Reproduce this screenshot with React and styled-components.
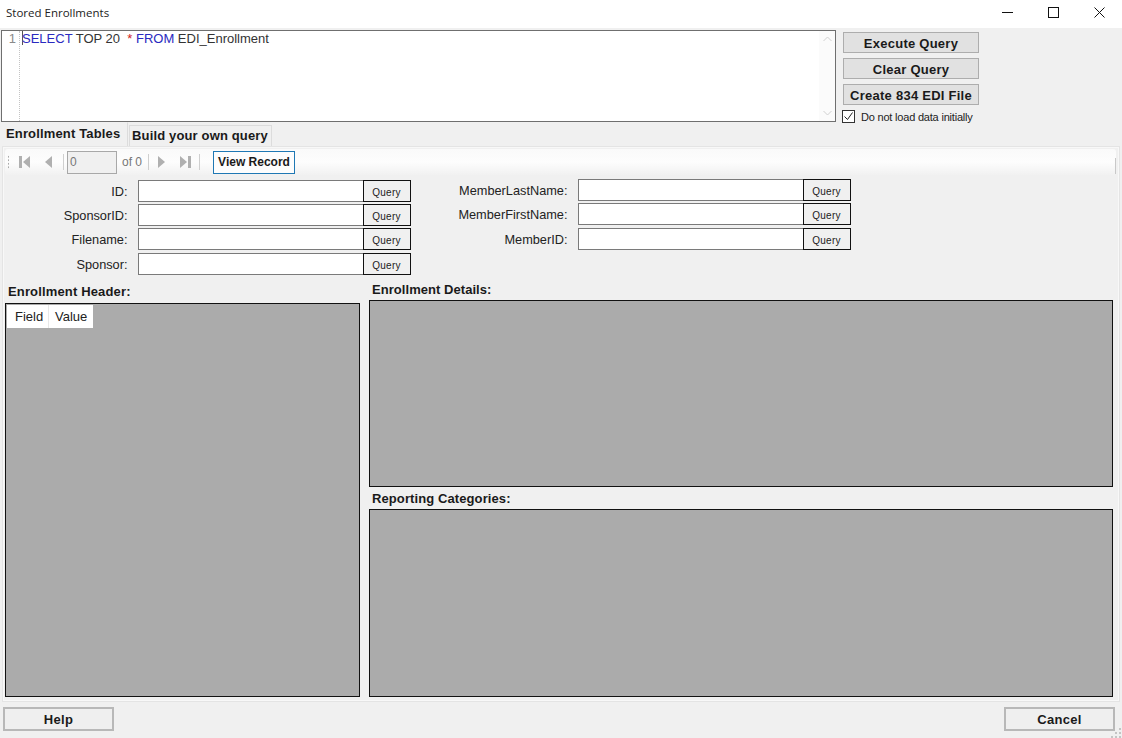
import React from "react";
import styled, { createGlobalStyle } from "styled-components";

const Global = createGlobalStyle`
  html, body { margin: 0; padding: 0; background: #f0f0f0; }
  * { box-sizing: border-box; }
  body { font-family: "Liberation Sans", Arial, sans-serif; color: #1a1a1a; }
`;

const Window = styled.div`
  position: relative;
  width: 1122px;
  height: 738px;
  background: #f0f0f0;
  display: flex;
  flex-direction: column;
  overflow: hidden;
`;

const TitleBar = styled.header`
  height: 28px;
  background: #fff;
  display: flex;
  align-items: center;
  justify-content: space-between;
  padding-left: 6px;
  flex: none;
`;
const Title = styled.span`
  font: 11.5px "Open Sans", sans-serif;
  color: #222;
  position: relative;
  top: -2px;
`;
const WindowControls = styled.div`
  display: flex;
  align-items: center;
  position: relative;
  top: -2px;
`;
const ControlGlyph = styled.span`
  width: 46px;
  height: 24px;
  display: flex;
  align-items: center;
  justify-content: center;
`;

const TopArea = styled.section`
  height: 95px;
  flex: none;
  display: flex;
  padding: 2px 0 0 1px;
`;
const Editor = styled.div`
  width: 835px;
  height: 92px;
  background: #fff;
  border: 1px solid #6f6f6f;
  display: flex;
`;
const Gutter = styled.div`
  width: 18px;
  border-right: 1px dotted #c4c4c4;
  color: #8a8a8a;
  font-size: 13px;
  text-align: right;
  padding: 0 3px 0 0;
  line-height: 15px;
  flex: none;
`;
const Code = styled.div`
  flex: 1;
  font-size: 13px;
  line-height: 15px;
  padding: 0 0 0 2px;
  white-space: pre;
  color: #333;
`;
const Caret = styled.span`
  display: inline-block;
  width: 1px;
  height: 14px;
  margin-right: -1px;
  background: #555;
  vertical-align: -2px;
`;
const Keyword = styled.span`
  color: #2a2ac0;
`;
const Operator = styled.span`
  color: #d02020;
`;
const EditorScroll = styled.div`
  width: 16px;
  background: #fbfbfb;
  display: flex;
  flex-direction: column;
  justify-content: space-between;
  align-items: center;
  padding: 5px 0;
  flex: none;
`;
const ActionColumn = styled.div`
  margin-left: 7px;
  padding-top: 2px;
  width: 140px;
`;
const ActionButton = styled.button`
  display: block;
  width: 136px;
  height: 21px;
  margin: 0 0 5px;
  padding: 2px 0 0;
  background: #e1e1e1;
  border: 1px solid #adadad;
  font: bold 13px "Liberation Sans", sans-serif;
  letter-spacing: 0.25px;
  color: #1a1a1a;
`;
const CheckRow = styled.label`
  display: flex;
  align-items: center;
  margin-left: -1px;
  font-size: 11px;
  letter-spacing: -0.2px;
  color: #222;
`;
const CheckBox = styled.span`
  width: 13px;
  height: 13px;
  border: 1px solid #333;
  background: #fff;
  display: flex;
  align-items: center;
  justify-content: center;
  margin-right: 6px;
`;

const TabStrip = styled.nav`
  height: 23px;
  flex: none;
  display: flex;
  align-items: flex-end;
`;
const Tab = styled.div`
  font: bold 13px "Liberation Sans", sans-serif;
  letter-spacing: 0.15px;
  white-space: nowrap;
  height: ${(p) => (p.$active ? 24 : 21)}px;
  width: ${(p) => p.$width}px;
  padding: ${(p) => (p.$active ? "3px 0 0 5px" : "2px 0 0 2px")};
  background: #f0f0f0;
  border: 1px solid ${(p) => (p.$active ? "transparent" : "#dcdcdc")};
  border-bottom: 0;
  margin-left: ${(p) => (p.$active ? 0 : 1)}px;
  ${(p) => p.$active && "border-right-color:#dcdcdc;"}
`;

const TabPanel = styled.main`
  height: 556px;
  flex: none;
  margin: 0 2px;
  border: 1px solid #e4e4e4;
  box-shadow: inset 0 0 0 1px #f8f8f8;
  padding: 2px 3px 0 2px;
  display: flex;
  flex-direction: column;
`;

const Toolbar = styled.div`
  height: 26px;
  flex: none;
  display: flex;
  align-items: center;
  background: linear-gradient(#fafafa, #fdfdfd 50%, #f1f1f1);
  border-radius: 3px;
  padding-left: 2px;
  position: relative;
`;
const Grip = styled.span`
  width: 3px;
  height: 14px;
  margin-right: 6px;
  background-image: radial-gradient(circle, #a9a9a9 1px, transparent 1px);
  background-size: 3px 3.5px;
`;
const ToolIcon = styled.svg`
  width: 16px;
  height: 16px;
  margin: 0 ${(p) => p.$mr ?? 4}px 0 ${(p) => p.$ml ?? 4}px;
  flex: none;
`;
const ToolSep = styled.span`
  width: 1px;
  height: 16px;
  background: #cfcfcf;
  margin: 0 ${(p) => p.$mr ?? 2}px 0 ${(p) => p.$ml ?? 2}px;
`;
const PageField = styled.div`
  width: 50px;
  height: 23px;
  background: #f0f0f0;
  border: 1px solid #a8a8a8;
  color: #777;
  font-size: 12px;
  line-height: 21px;
  padding-left: 2px;
  margin-left: 3px;
`;
const OfLabel = styled.span`
  color: #777;
  font-size: 12px;
  margin-left: 5px;
`;
const ViewRecord = styled.button`
  width: 82px;
  height: 23px;
  padding: 0;
  margin-left: 13px;
  background: #fdfdfd;
  border: 1px solid #1f78b4;
  font: bold 12px "Liberation Sans", sans-serif;
  color: #1a1a1a;
`;
const ToolbarEdge = styled.span`
  position: absolute;
  right: 0;
  top: 9px;
  height: 16px;
  width: 1px;
  background: #c8c8c8;
`;

const SearchArea = styled.div`
  height: 108px;
  flex: none;
  display: grid;
  grid-template-columns: 440px 273px;
`;
const SearchColumn = styled.div`
  padding-top: ${(p) => p.$top}px;
`;
const SearchRow = styled.div`
  display: flex;
  align-items: center;
  height: 22px;
  margin-bottom: ${(p) => p.$mb ?? 2}px;
`;
const FieldLabel = styled.label`
  font-size: 12.75px;
  color: #222;
  text-align: right;
  white-space: nowrap;
  width: ${(p) => p.$width}px;
  padding-right: 10.5px;
  flex: none;
`;
const FieldInput = styled.div`
  width: 225px;
  height: 22px;
  background: #fff;
  border: 1px solid #7a7a7a;
  border-right: 0;
  flex: none;
`;
const QueryButton = styled.button`
  width: 48px;
  height: 22px;
  padding: 2px 1px 0 0;
  background: #f0f0f0;
  border: 1px solid #111;
  font: 10px "Liberation Sans", sans-serif;
  letter-spacing: 0.3px;
  color: #222;
  flex: none;
`;

const Panels = styled.div`
  flex: 1;
  display: grid;
  grid-template-columns: 355px 744px;
  column-gap: 9px;
  min-height: 0;
`;
const PanelColumn = styled.div`
  display: flex;
  flex-direction: column;
  min-height: 0;
`;
const PanelTitle = styled.div`
  font: bold 13px "Liberation Sans", sans-serif;
  letter-spacing: ${(p) => p.$ls || 0}px;
  color: #1a1a1a;
  height: ${(p) => p.$h}px;
  padding: 0 0 ${(p) => p.$pb}px 3px;
  display: flex;
  align-items: flex-end;
  flex: none;
  line-height: 15px;
`;
const GridArea = styled.div`
  height: ${(p) => p.$h}px;
  flex: none;
  background: #ababab;
  border: 1px solid #111;
  padding: 1px;
`;
const GridHeader = styled.div`
  display: inline-flex;
  background: #fff;
  height: 23px;
`;
const GridHeaderCell = styled.div`
  font-size: 13px;
  line-height: 24px;
  color: #222;
  width: ${(p) => p.$width}px;
  padding-left: ${(p) => p.$pl}px;
  border-right: 1px solid ${(p) => (p.$last ? "transparent" : "#e8e8e8")};
`;

const Footer = styled.footer`
  flex: 1;
  display: flex;
  justify-content: space-between;
  align-items: flex-start;
  padding: 5px 7px 0 3px;
`;
const FooterButton = styled.button`
  width: 111px;
  height: 24px;
  padding: 0;
  background: #efefef;
  border: 2px solid #b8b8b8;
  font: bold 13px "Liberation Sans", sans-serif;
  letter-spacing: 0.3px;
  color: #1a1a1a;
`;
const ResizeGrip = styled.svg`
  position: absolute;
  right: 0;
  bottom: 0;
  width: 12px;
  height: 12px;
`;

const First = () => (
  <ToolIcon viewBox="0 0 16 16" $ml={1} $mr={8}>
    <path d="M2 2h3v12H2z" fill="#b0b0b0" />
    <path d="M13 2v12L6 8z" fill="#b0b0b0" />
  </ToolIcon>
);
const Prev = () => (
  <ToolIcon viewBox="0 0 16 16" $ml={0} $mr={6}>
    <path d="M11 2v12L4 8z" fill="#b0b0b0" />
  </ToolIcon>
);
const Next = () => (
  <ToolIcon viewBox="0 0 16 16" $ml={1} $mr={5}>
    <path d="M5 2v12l7-6z" fill="#b0b0b0" />
  </ToolIcon>
);
const Last = () => (
  <ToolIcon viewBox="0 0 16 16" $ml={3} $mr={4}>
    <path d="M3 2v12l7-6z" fill="#b0b0b0" />
    <path d="M11 2h3v12h-3z" fill="#b0b0b0" />
  </ToolIcon>
);

const Field = ({ label, mb }) => (
  <SearchRow $mb={mb}>
    <FieldLabel $width={133}>{label}</FieldLabel>
    <FieldInput />
    <QueryButton>Query</QueryButton>
  </SearchRow>
);

export default function App() {
  return (
    <Window>
      <Global />
      <TitleBar>
        <Title>Stored Enrollments</Title>
        <WindowControls>
          <ControlGlyph>
            <svg width="11" height="11" viewBox="0 0 11 11"><path d="M0 5.5h11" stroke="#111" /></svg>
          </ControlGlyph>
          <ControlGlyph>
            <svg width="11" height="11" viewBox="0 0 11 11"><rect x=".5" y=".5" width="10" height="10" fill="none" stroke="#111" /></svg>
          </ControlGlyph>
          <ControlGlyph>
            <svg width="11" height="11" viewBox="0 0 11 11"><path d="M.5.5l10 10M10.5.5l-10 10" stroke="#111" /></svg>
          </ControlGlyph>
        </WindowControls>
      </TitleBar>

      <TopArea>
        <Editor>
          <Gutter>1</Gutter>
          <Code>
            <Caret /><Keyword>SELECT</Keyword> TOP 20  <Operator>*</Operator> <Keyword>FROM</Keyword> EDI_Enrollment
          </Code>
          <EditorScroll>
            <svg width="9" height="6" viewBox="0 0 9 6"><path d="M.5 5l4-4 4 4" fill="none" stroke="#d0d0d0" /></svg>
            <svg width="9" height="6" viewBox="0 0 9 6"><path d="M.5 1l4 4 4-4" fill="none" stroke="#d0d0d0" /></svg>
          </EditorScroll>
        </Editor>
        <ActionColumn>
          <ActionButton>Execute Query</ActionButton>
          <ActionButton>Clear Query</ActionButton>
          <ActionButton>Create 834 EDI File</ActionButton>
          <CheckRow>
            <CheckBox>
              <svg width="11" height="11" viewBox="0 0 11 11"><path d="M1.5 5.5l3 3 5-7" fill="none" stroke="#222" /></svg>
            </CheckBox>
            Do not load data initially
          </CheckRow>
        </ActionColumn>
      </TopArea>

      <TabStrip>
        <Tab $active $width={128}>Enrollment Tables</Tab>
        <Tab $width={143}>Build your own query</Tab>
      </TabStrip>

      <TabPanel>
        <Toolbar>
          <Grip />
          <First />
          <Prev />
          <ToolSep $ml={0} $mr={0} />
          <PageField>0</PageField>
          <OfLabel>of 0</OfLabel>
          <ToolSep $ml={6} $mr={3} />
          <Next />
          <Last />
          <ToolSep $ml={2} $mr={0} />
          <ViewRecord>View Record</ViewRecord>
          <ToolbarEdge />
        </Toolbar>

        <SearchArea>
          <SearchColumn $top={5}>
            <Field label="ID:" />
            <Field label="SponsorID:" />
            <Field label="Filename:" mb={3} />
            <Field label="Sponsor:" />
          </SearchColumn>
          <SearchColumn $top={4}>
            <Field label="MemberLastName:" />
            <Field label="MemberFirstName:" mb={3} />
            <Field label="MemberID:" />
          </SearchColumn>
        </SearchArea>

        <Panels>
          <PanelColumn>
            <PanelTitle $h={20} $pb={4} $ls={0.15}>Enrollment Header:</PanelTitle>
            <GridArea $h={394}>
              <GridHeader>
                <GridHeaderCell $width={42} $pl={8}>Field</GridHeaderCell>
                <GridHeaderCell $width={44} $pl={6} $last>Value</GridHeaderCell>
              </GridHeader>
            </GridArea>
          </PanelColumn>
          <PanelColumn>
            <PanelTitle $h={17} $pb={3} $ls={0.05}>Enrollment Details:</PanelTitle>
            <GridArea $h={187} />
            <PanelTitle $h={22} $pb={3} $ls={0.1}>Reporting Categories:</PanelTitle>
            <GridArea $h={188} />
          </PanelColumn>
        </Panels>
      </TabPanel>

      <Footer>
        <FooterButton>Help</FooterButton>
        <FooterButton>Cancel</FooterButton>
      </Footer>
      <ResizeGrip viewBox="0 0 12 12">
        <path d="M9 2h2v2H9zM5 6h2v2H5zM9 6h2v2H9zM1 10h2v2H1zM5 10h2v2H5zM9 10h2v2H9z" fill="#c4c4c4" />
      </ResizeGrip>
    </Window>
  );
}
